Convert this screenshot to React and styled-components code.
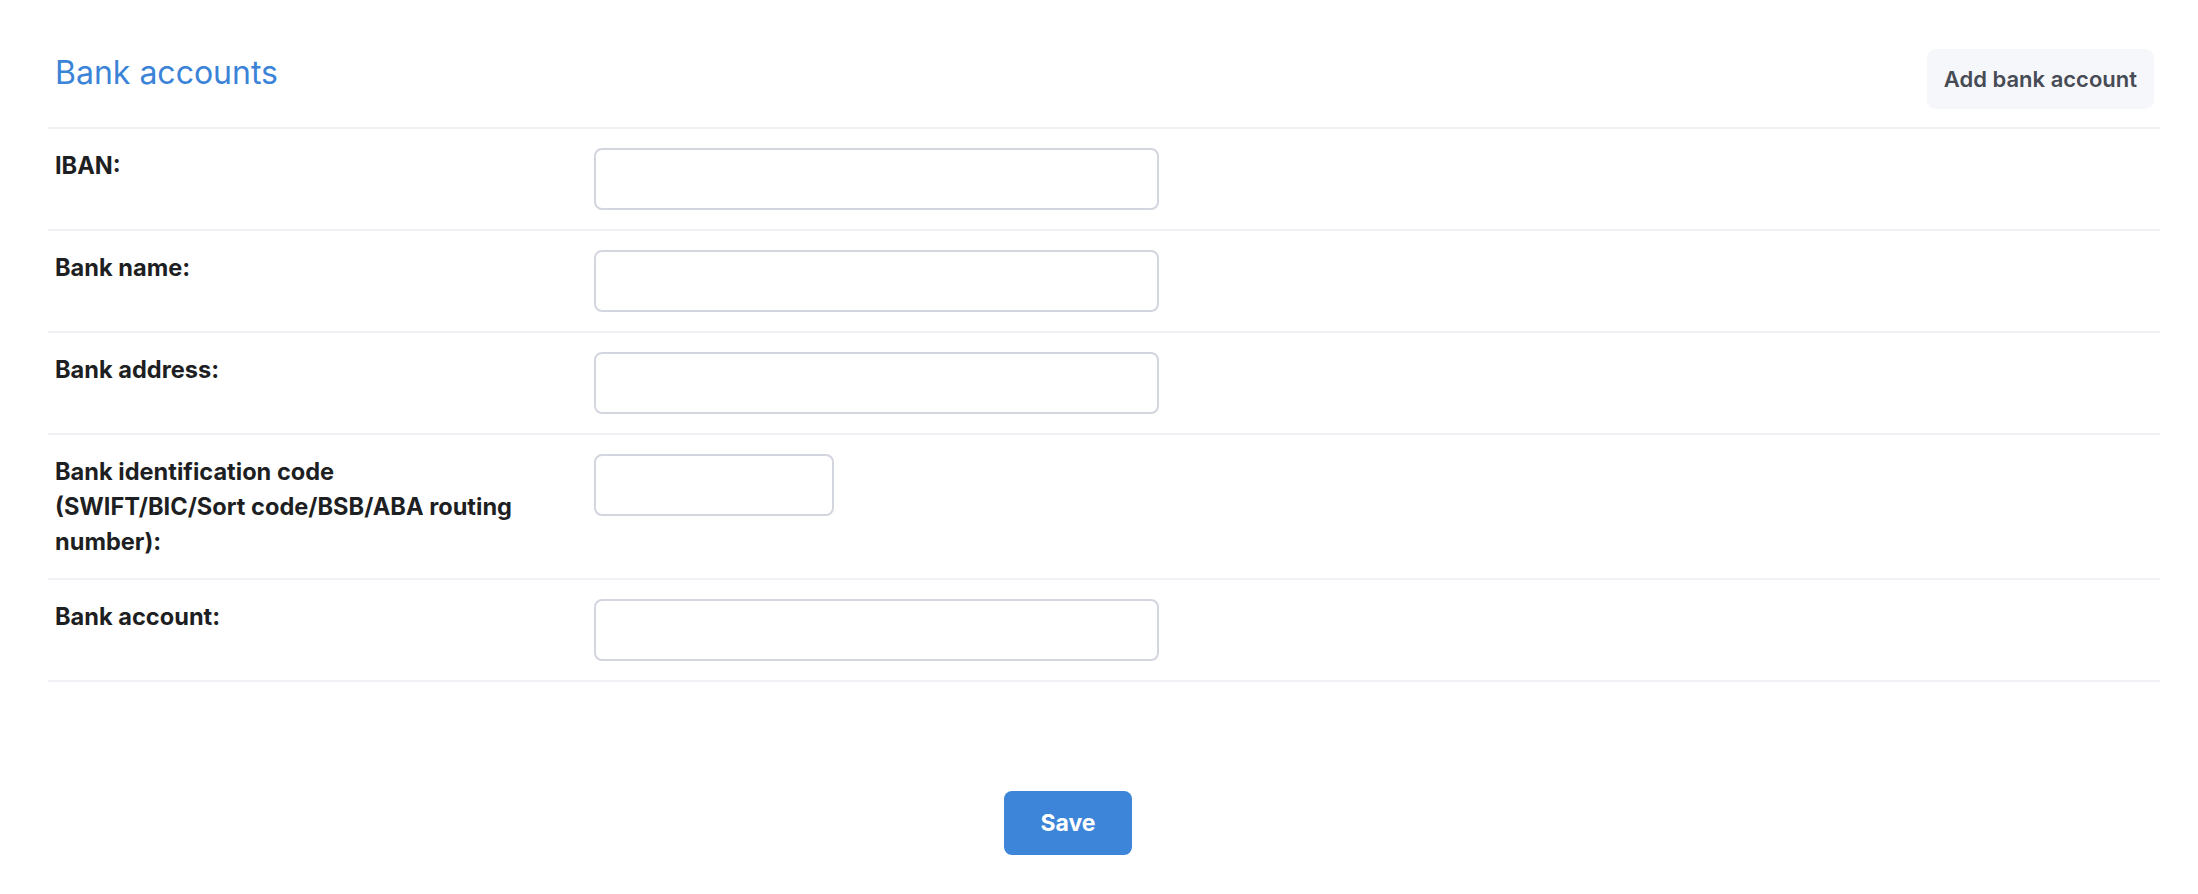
import React from 'react'
import styled, { createGlobalStyle } from 'styled-components'

const GlobalStyle = createGlobalStyle`
  html, body {
    margin: 0;
    padding: 0;
    background: #ffffff;
  }
  body {
    font-family: Inter, "Noto Sans", "Liberation Sans", sans-serif;
    color: #1e1f23;
  }
  * {
    box-sizing: border-box;
  }
`

const Page = styled.div`
  padding: 0 38px 0 48px;
`

const Header = styled.div`
  display: flex;
  justify-content: space-between;
  align-items: flex-start;
  padding: 49px 6px 18px 7px;
  border-bottom: 2px solid #f0f0f5;
`

const Title = styled.h2`
  margin: 5px 0 0;
  font-size: 32px;
  font-weight: 400;
  line-height: 1.2;
  color: #3b83d7;
`

const GhostButton = styled.button`
  height: 60px;
  padding: 0 17px;
  border: none;
  border-radius: 9px;
  background: #f6f7fa;
  color: #474b55;
  font-family: inherit;
  font-size: 22px;
  font-weight: 600;
  cursor: pointer;
`

const Row = styled.div`
  display: grid;
  grid-template-columns: 500px 1fr;
  column-gap: 39px;
  align-items: start;
  padding: 19px 7px 19px;
  border-bottom: 2px solid #f0f0f5;
`

const Label = styled.label`
  font-size: 23.6px;
  font-weight: 700;
  line-height: 35px;
  color: #1e1f23;
`

const Input = styled.input`
  display: block;
  width: ${(p) => (p.$short ? '240px' : '565px')};
  height: 62px;
  padding: 0 14px;
  border: 2px solid #d3d6df;
  border-radius: 8px;
  background: #fff;
  font-family: inherit;
  font-size: 21px;
  outline: none;
`

const Footer = styled.div`
  display: flex;
  justify-content: center;
  padding: 109px 72px 0 0;
`

const PrimaryButton = styled.button`
  width: 128px;
  height: 64px;
  border: none;
  border-radius: 8px;
  background: #3d85d8;
  color: #ffffff;
  font-family: inherit;
  font-size: 23px;
  font-weight: 700;
  cursor: pointer;
`

const fields = [
  { id: 'iban', label: 'IBAN:' },
  { id: 'bank-name', label: 'Bank name:' },
  { id: 'bank-address', label: 'Bank address:' },
  {
    id: 'bic',
    label: (
      <>
        Bank identification code
        <br />
        (SWIFT/BIC/Sort code/BSB/ABA routing number):
      </>
    ),
    short: true,
  },
  { id: 'bank-account', label: 'Bank account:' },
]

export default function App() {
  return (
    <>
      <GlobalStyle />
      <Page>
        <Header>
          <Title>Bank accounts</Title>
          <GhostButton type="button">Add bank account</GhostButton>
        </Header>
        {fields.map((f) => (
          <Row key={f.id}>
            <Label htmlFor={f.id}>{f.label}</Label>
            <Input id={f.id} type="text" $short={f.short} />
          </Row>
        ))}
        <Footer>
          <PrimaryButton type="button">Save</PrimaryButton>
        </Footer>
      </Page>
    </>
  )
}
